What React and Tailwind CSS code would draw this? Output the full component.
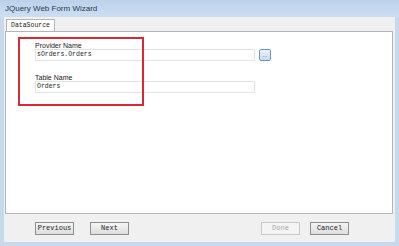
import React from 'react';

function Btn({ children, disabled }) {
  return (
    <div
      className={
        'w-[39px] h-[13px] flex items-center justify-center border text-[7px] leading-none ' +
        (disabled
          ? 'border-[#c9c9c9] bg-[#f4f4f4] text-[#a8a8a8]'
          : 'border-[#8e8f8f] bg-gradient-to-b from-[#f6f6f6] to-[#dddddd] text-[#222]')
      }
      style={{ fontFamily: '"Liberation Mono", monospace' }}
    >
      {children}
    </div>
  );
}

function Field({ label, value, browse }) {
  return (
    <div className="flex flex-col">
      <div className="text-[7px] leading-none text-[#222] h-[8px] flex items-center">{label}</div>
      <div className="flex items-center gap-[4px]">
        <div
          className="w-[220px] h-[12px] border border-[#e2e2e2] bg-white flex items-center px-[1px] text-[6.5px] text-[#222]"
          style={{ fontFamily: '"Liberation Mono", monospace' }}
        >
          {value}
        </div>
        {browse && (
          <div className="w-[12px] h-[12px] border border-[#6f95bd] rounded-[2px] bg-gradient-to-b from-[#eaf3fb] to-[#c9dcee] flex items-center justify-center text-[6px] leading-none text-[#556]">
            ...
          </div>
        )}
      </div>
    </div>
  );
}

export default function App() {
  return (
    <div
      className="w-[399px] h-[246px] bg-[#c7d9ee] flex flex-col overflow-hidden"
      style={{ fontFamily: '"Liberation Sans", Arial, sans-serif' }}
    >
      <div className="h-[17px] flex items-center pl-[5px] text-[8px] text-[#2a3a55] bg-gradient-to-b from-[#bcd1eb] to-[#cddef1]">
        JQuery Web Form Wizard
      </div>
      <div className="flex-1 mx-[4px] mb-[4px] bg-[#f0f0f0] flex flex-col">
        <div className="flex-1 flex flex-col pl-[1px] pr-[2px] pt-[1px]">
          <div className="flex">
            <div
              className="h-[13px] px-[4px] flex items-center border border-b-0 border-[#b5b5b5] bg-white text-[6.5px] text-[#222] relative top-[1px] ml-[1px]"
              style={{ fontFamily: '"Liberation Mono", monospace' }}
            >
              DataSource
            </div>
          </div>
          <div className="h-[183px] border border-[#b5b5b5] bg-white relative pl-[29px] pt-[9px] flex flex-col gap-[12px]">
            <Field label="Provider Name" value="sOrders.Orders" browse />
            <Field label="Table Name" value="Orders" />
            <div className="absolute left-[12px] top-[5px] w-[126px] h-[69px] border-2 border-[#d42a38]" />
          </div>
          <div className="flex-1 flex items-center pl-[30px] pr-[44px]">
            <div className="flex gap-[16px]">
              <Btn>Previous</Btn>
              <Btn>Next</Btn>
            </div>
            <div className="flex-1" />
            <div className="flex gap-[10px]">
              <Btn disabled>Done</Btn>
              <Btn>Cancel</Btn>
            </div>
          </div>
        </div>
      </div>
    </div>
  );
}
